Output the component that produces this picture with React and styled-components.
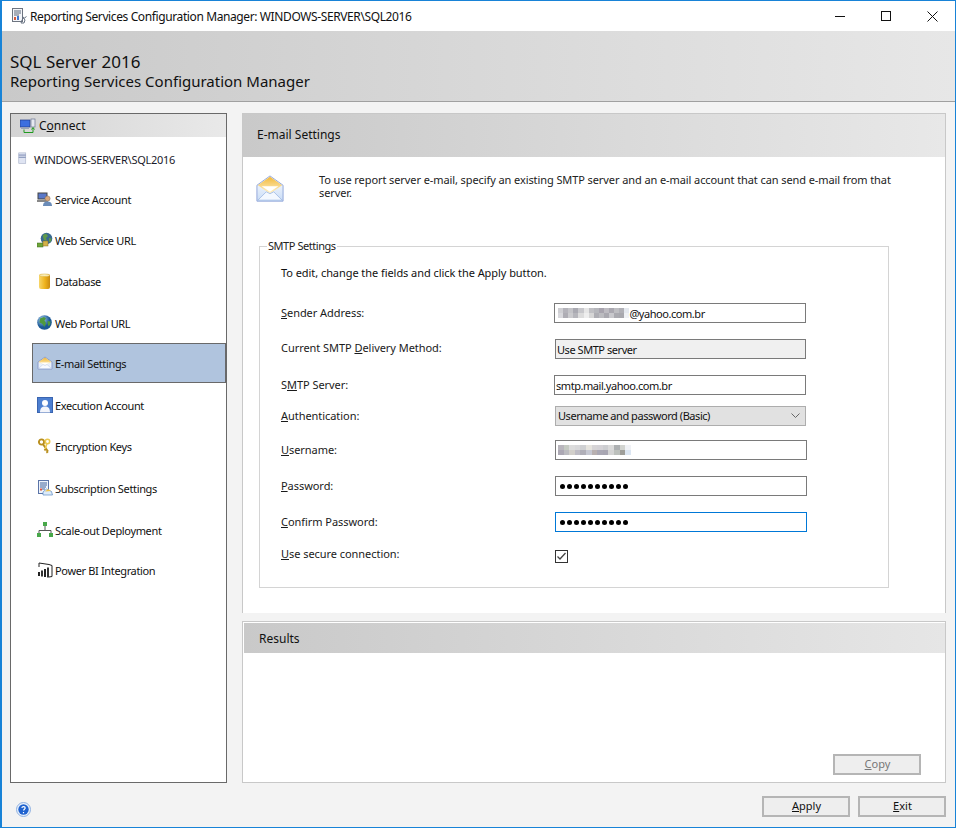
import React from 'react';
import styled, { createGlobalStyle } from 'styled-components';

const Global = createGlobalStyle`
  html, body { margin: 0; padding: 0; background: #f3f3f3; }
  body { font-family: "Noto Sans", "Open Sans", sans-serif; color: #000; }
  u { text-underline-offset: 1px; text-decoration-thickness: 1px; }
`;

const Win = styled.div`
  width: 956px; height: 828px; box-sizing: border-box;
  border: 1px solid #1883d7; border-left-width: 2px;
  background: #f3f3f3; display: flex; flex-direction: column; overflow: hidden;
`;
const TitleBar = styled.div`
  height: 30px; background: #fff; display: flex; align-items: center; padding-left: 9px; flex: none;
`;
const TitleText = styled.div`
  font-size: 12px; margin-left: 3px; white-space: nowrap; letter-spacing: -.39px; flex: 1; color: #111;
`;
const WinBtn = styled.div`
  width: 46px; height: 30px; display: flex; align-items: center; justify-content: center;
  svg { display: block; }
`;
const Banner = styled.div`
  height: 71px; flex: none; box-sizing: border-box; border-bottom: 1px solid #a0a0a0;
  background: linear-gradient(90deg, #c9c9c9, #e7e7e7);
  padding: 21px 0 0 8px; color: #111;
`;
const BannerTitle = styled.div`font-size: 17px; line-height: 20px;`;
const BannerSub = styled.div`font-size: 15px; line-height: 18px;`;

const Main = styled.div`
  flex: none; height: 670px; margin-top: 11px; padding: 0 9px 0 8px; display: flex; gap: 15px;
`;
const Sidebar = styled.div`
  width: 217px; height: 670px; flex: none; box-sizing: border-box;
  border: 1px solid #696969; background: #fff; display: flex; flex-direction: column;
`;
const ConnectBar = styled.div`
  height: 23px; flex: none; display: flex; align-items: center; padding-left: 9px; gap: 3px;
  font-size: 12px; color: #111;
  background: linear-gradient(90deg, #d4d4d4, #e9e9e9);
`;
const ServerRow = styled.div`
  display: flex; align-items: center; gap: 3px; height: 20px; margin-top: 12px; padding-left: 6px;
  font-size: 11px; color: #1a1a2a; white-space: nowrap; letter-spacing: -.26px;
`;
const Nav = styled.div`display: flex; flex-direction: column; padding: 10px 0 0 21px;`;
const NavItem = styled.div`
  height: 40px; flex: none; box-sizing: border-box; display: flex; align-items: center; gap: 2px;
  margin-top: ${p => p.$mt}px; padding-left: 4px; font-size: 11px; color: #111; white-space: nowrap;
  letter-spacing: -.35px;
  border: 1px solid ${p => p.$active ? '#696969' : 'transparent'};
  background: ${p => p.$active ? '#b0c4de' : 'transparent'};
  svg { flex: none; }
`;

const Right = styled.div`flex: 1; display: flex; flex-direction: column; width: 704px;`;
const Panel = styled.div`
  height: 500px; box-sizing: border-box; flex: none; background: #fff;
  border: 1px solid #c8c8c8; border-bottom: 0; display: flex; flex-direction: column;
`;
const SectionHead = styled.div`
  height: 43px; box-sizing: border-box; flex: none; display: flex; align-items: center; padding: 0 0 2px 14px; font-size: 12px; color: #111;
  background: linear-gradient(90deg, #c9c9c9, #e8e8e8);
`;
const Intro = styled.div`
  display: flex; margin-top: 16px; padding-left: 13px; height: 73px; flex: none;
`;
const EnvelopeWrap = styled.div`
  flex: none; margin-top: 2px; height: 28px;
  svg { display: block; }
`;
const IntroText = styled.p`
  margin: 0 0 0 35px; width: 590px; font-size: 11px; line-height: 13px; color: #222; letter-spacing: -.09px;
`;
const FieldSet = styled.div`
  position: relative; box-sizing: border-box; width: 630px; height: 342px; margin-left: 16px;
  border: 1px solid #d4d4d4; padding: 20px 0 0 21px; font-size: 11px; color: #111;
`;
const Legend = styled.div`
  position: absolute; top: -8px; left: 7px; background: #fff; padding: 0 1px; font-size: 11px; line-height: 14px;
  color: #222; letter-spacing: -.45px;
`;
const Hint = styled.div`height: 16px; line-height: 12px; font-size: 11px; letter-spacing: -.06px;`;
const FormRow = styled.div`
  display: grid; grid-template-columns: 273px 1fr; align-items: center; height: ${p => p.$h}px; margin-top: ${p => p.$mt}px;
`;
const Label = styled.div`
  font-size: 11px; white-space: nowrap; letter-spacing: -.05px; color: #1a1a1a; position: relative; top: ${p => p.$dy || 0}px;
`;
const Input = styled.div`
  width: ${p => p.$w || 252}px; height: 20px; box-sizing: border-box; border: 1px solid ${p => p.$focus ? '#0078d7' : '#7a7a7a'};
  background: ${p => p.$bg || '#fff'}; display: flex; align-items: center; padding-left: ${p => p.$pl || 1}px;
  margin-left: ${p => p.$ml || 0}px; font-size: 11px; color: #111; white-space: nowrap; letter-spacing: -.45px;
`;
const Select = styled.div`
  width: 251px; height: 20px; margin-left: 1px; box-sizing: border-box; border: 1px solid #adadad; background: #e1e1e1;
  display: flex; align-items: center; justify-content: space-between; padding: 0 5px 1px 2px; font-size: 11px; color: #111;
  letter-spacing: -.45px;
`;
const Dots = styled.span`display: flex; gap: 2px; padding-left: 3px;`;
const Dot = styled.i`display: block; width: 5px; height: 5px; border-radius: 50%; background: #000;`;
const CheckBox = styled.div`
  width: 13px; height: 13px; box-sizing: border-box; border: 1px solid #333; margin-left: 1px; background: #fff;
  display: flex; align-items: center; justify-content: center;
`;

const ResultsPanel = styled.div`
  margin-top: 8px; height: 162px; flex: none; box-sizing: border-box; background: #fff;
  border: 1px solid #c8c8c8; padding-top: 1px;
  display: flex; flex-direction: column;
`;
const ResultsHead = styled.div`
  height: 30px; flex: none; display: flex; align-items: center; padding-left: 15px; font-size: 12px; color: #111;
  margin-left: 1px;
  background: linear-gradient(90deg, #c9c9c9, #e6e6e6);
`;
const CopyWrap = styled.div`flex: 1; display: flex; justify-content: flex-end; align-items: flex-end; padding: 0 24px 7px 0;`;
const Btn = styled.div`
  width: 88px; height: 21px; box-sizing: border-box; border: 2px solid #b5b5b5; background: #eee;
  display: flex; align-items: center; justify-content: center; padding: 0 0 2px 1px; font-size: 11px;
  color: ${p => p.$dis ? '#777' : '#111'};
`;
const Footer = styled.div`
  flex: 1; display: flex; align-items: flex-start; justify-content: space-between; padding: 13px 9px 0 14px;
`;
const BtnGroup = styled.div`display: flex; gap: 8px;`;
const HelpIcon = styled.div`margin-top: 4px;`;

const Mosaic = ({ rows, cw = 5, ch = 5 }) => (
  <svg width={rows[0].length * cw} height={rows.length * ch} shapeRendering="crispEdges" aria-hidden style={{ flex: 'none' }}>
    {rows.map((r, j) => r.map((c, i) => <rect key={i + '-' + j} x={i * cw} y={j * ch} width={cw + .5} height={ch} fill={c} />))}
  </svg>
);
const senderMosaic = [
  ['#cfcfd3', '#b4b3ba', '#c4c4c8', '#aaaab2', '#c8c8cc', '#e6e6e6', '#c0c0c4', '#b6b7bc', '#a8a4ae', '#bebcc2', '#aaa8b0', '#bebec2', '#b0b0b6', '#e4e8ee'],
  ['#d8d8dc', '#aeadb4', '#cbcbce', '#b6b6bc', '#dcdcdc', '#eeeeee', '#d6d6d6', '#aeaeb4', '#bcbcc0', '#aaa9b0', '#c8c8cc', '#aaaab0', '#a8a8ae', '#eef0f4'],
];
const userMosaic = [
  ['#b9b6bd', '#c5cac2', '#dcdcdc', '#d8d8da', '#cfd0d2', '#e6e4de', '#d6d4d6', '#d4d2d6', '#cccdd0', '#dadada', '#adb0b2', '#d2d4d0', '#f0f2f6'],
  ['#aca8b4', '#bcbcc0', '#d2cfca', '#bebcc4', '#b0afb8', '#c6c8d2', '#b8b0b0', '#aaa8b4', '#a8a6b2', '#d4d4d4', '#bcc0bc', '#9f9f9a', '#dce6f2'],
];

const Ic = ({ children, s = 16 }) => <svg width={s} height={s} viewBox="0 0 16 16" aria-hidden>{children}</svg>;

const icons = {
  account: <Ic><rect x="1" y="2" width="9" height="6" fill="#5a78c8" stroke="#444" /><rect x="0" y="9" width="11" height="2" fill="#888" /><circle cx="10.5" cy="7.5" r="2.6" fill="#d9a77a" stroke="#7b6a5a" strokeWidth=".5" /><path d="M6 15c0-3.5 2-4.6 4.5-4.6s4.500 1.100 4.500 4.600z" fill="#6b8cb8" /></Ic>,
  web: <Ic><circle cx="9.500" cy="6.500" r="5.800" fill="#3a6a90" /><path d="M6 3l3-1.500 2 2.500-2 2 1 3-3-1-1-3zM12 6l2.500.5-.5 3-2 .5z" fill="#5f9a4a" /><rect x="0" y="11" width="6" height="4" fill="#6fa53a" stroke="#3b6e1f" strokeWidth=".5" /><rect x="6" y="9" width="5" height="5" fill="#d4b24a" stroke="#85702a" strokeWidth=".5" /></Ic>,
  db: <Ic><defs><linearGradient id="dbg"><stop offset="0" stopColor="#f7d66a" /><stop offset=".55" stopColor="#eeb21c" /><stop offset="1" stopColor="#c98a10" /></linearGradient></defs><rect x="2" y="1" width="11" height="15" rx="2" fill="url(#dbg)" /><ellipse cx="7.500" cy="2.200" rx="5" ry="1.300" fill="#fbeeb8" stroke="#c9a030" strokeWidth=".4" /></Ic>,
  globe: <Ic><defs><radialGradient id="glb" cx=".35" cy=".3"><stop offset="0" stopColor="#a7cdf0" /><stop offset="1" stopColor="#1c5a96" /></radialGradient></defs><circle cx="7.500" cy="7.500" r="7.300" fill="url(#glb)" /><path d="M3 3.500l4-1.500 2 1.500-1.500 2 1.500 2.500-1.500 4-2-3-3-1.500zM10.500 6l3 .5-.5 3.500-2 1z" fill="#4f9a3e" /></Ic>,
  mail: <Ic><defs><linearGradient id="mlg" x1="0" y1="0" x2="0" y2="1"><stop offset="0" stopColor="#f0b838" /><stop offset="1" stopColor="#fff1c4" /></linearGradient></defs><path d="M1 7l7-5 7 5v7H1z" fill="#e9f0fb" stroke="#8b9ccc" /><path d="M1.500 7l6.500-4.500L14.500 7 8 10z" fill="url(#mlg)" /><path d="M3 7.500h10L8 10z" fill="#fff" /><path d="M1.500 13.500l4.500-4 2 1 2-1 4.500 4z" fill="#f9fbff" stroke="#b6c6e4" strokeWidth=".5" /></Ic>,
  exec: <Ic><rect x=".500" y=".500" width="15" height="15" fill="#4d7fd0" stroke="#3a64b0" /><circle cx="8" cy="6" r="3" fill="#fff" /><path d="M3 15.500c0-4.500 2-6 5-6s5 1.500 5 6z" fill="#f3f5fb" /></Ic>,
  keys: <Ic><g fill="none" stroke="#b98f1e" strokeWidth="1.900"><circle cx="4.500" cy="4" r="2.600" /><path d="M6 6.200l5 7.300M9.300 11l-2 1.300M11 13.500l-1.700 1.100" /></g><g fill="none" stroke="#ecc94f" strokeWidth="1.600"><circle cx="10.500" cy="3.500" r="2.200" /><path d="M9.800 5.800l-1.500 5" /></g></Ic>,
  subs: <Ic><rect x="1.500" y=".500" width="10" height="13" fill="#eef3fb" stroke="#5b74a8" /><path d="M3 3h7M3 5h7M3 7h6M5 9h3" stroke="#41629c" strokeWidth="1" /><rect x="3" y="8.500" width="2" height="2" fill="#d9533b" /><path d="M6 15l0-3 3.500-3 5 2.500 1 3.500z" fill="#dcebfa" stroke="#5d8ac2" strokeWidth=".7" /><path d="M8 11.500l3-2.500 3 2z" fill="#f1c242" /></Ic>,
  scale: <Ic><path d="M8 4v4M2 12V8.500h12V12" stroke="#555" strokeWidth="1" fill="none" /><rect x="6" y="0" width="4" height="4" fill="#48a84a" /><rect x="0" y="11" width="4" height="4" fill="#48a84a" /><rect x="12" y="11" width="4" height="4" fill="#48a84a" /></Ic>,
  pbi: <Ic><path d="M2 5V1l10 1.500 3 1v11l-3 .5" fill="none" stroke="#222" strokeWidth="1" /><rect x="1" y="10" width="2" height="4" fill="#222" /><rect x="4" y="8.500" width="2" height="6" fill="#333" /><rect x="7" y="7" width="2" height="8" fill="#222" /><rect x="10" y="5.500" width="2" height="10" fill="#333" /></Ic>,
};

const nav = [
  ['account', 'Service Account', 0], ['web', 'Web Service URL', 1], ['db', 'Database', 1], ['globe', 'Web Portal URL', 2],
  ['mail', 'E-mail Settings', 0], ['exec', 'Execution Account', 2], ['keys', 'Encryption Keys', 1],
  ['subs', 'Subscription Settings', 2], ['scale', 'Scale-out Deployment', 2], ['pbi', 'Power BI Integration', 0],
];

const Password = () => <Dots>{Array.from({ length: 10 }, (_, i) => <Dot key={i} />)}</Dots>;
const Chevron = () => <svg width="9" height="5" viewBox="0 0 9 5" aria-hidden><path d="M.5.5l4 4 4-4" fill="none" stroke="#666" strokeWidth="1" /></svg>;

export default function App() {
  return (
    <Win>
      <Global />
      <TitleBar>
        <Ic><rect x="1.500" y=".500" width="10" height="13" fill="#f4f6fa" stroke="#6d7480" /><path d="M3 3h7M3 5h7M3 7h5" stroke="#5b6678" /><rect x="3" y="9" width="2" height="3" fill="#d55a3a" /><rect x="6" y="8" width="2" height="4" fill="#4477cc" /><path d="M10 15l1-3 1.500-2 1.500 2-1 3zM11 8.500l2.500 1.500 2-1.500" fill="none" stroke="#667080" /></Ic>
        <TitleText>Reporting Services Configuration Manager: WINDOWS-SERVER\SQL2016</TitleText>
        <WinBtn><svg width="11" height="11" aria-hidden><rect x="0" y="5" width="10" height="1" fill="#111" /></svg></WinBtn>
        <WinBtn><svg width="11" height="11" aria-hidden><rect x=".500" y=".500" width="9" height="9" fill="none" stroke="#111" /></svg></WinBtn>
        <WinBtn><svg width="11" height="11" viewBox="0 0 11 11" aria-hidden><path d="M.500.500l10 10M10.500.500l-10 10" stroke="#111" strokeWidth="1" /></svg></WinBtn>
      </TitleBar>
      <Banner>
        <BannerTitle>SQL Server 2016</BannerTitle>
        <BannerSub>Reporting Services Configuration Manager</BannerSub>
      </Banner>
      <Main>
        <Sidebar>
          <ConnectBar>
            <Ic><rect x="0" y="2" width="10" height="7" fill="#3d6fe0" stroke="#203a88" strokeWidth=".7" /><rect x="1" y="9.500" width="8" height="1.500" fill="#9aa3b8" /><rect x="11" y="1" width="4" height="8" fill="#e5e8f0" stroke="#6a7490" strokeWidth=".7" /><path d="M4 11.500V14.500H13V10M11.500 11.500L13 9.500l1.500 2" fill="none" stroke="#1f9a1f" strokeWidth="1" /></Ic>
            <span>C<u>o</u>nnect</span>
          </ConnectBar>
          <ServerRow>
            <Ic s={14}><rect x="2" y="1" width="8" height="12" fill="#dfe4f2" stroke="#a7b0c8" strokeWidth=".7" /><path d="M2 3.500h8M2 6h8" stroke="#6b7da8" strokeWidth="1" /></Ic>
            <span>WINDOWS-SERVER\SQL2016</span>
          </ServerRow>
          <Nav>
            {nav.map(([ic, label, mt]) => (
              <NavItem key={label} $mt={mt} $active={label === 'E-mail Settings'}>
                {icons[ic]}<span>{label}</span>
              </NavItem>
            ))}
          </Nav>
        </Sidebar>
        <Right>
          <Panel>
            <SectionHead>E-mail Settings</SectionHead>
            <Intro>
              <EnvelopeWrap>
                <svg width="28" height="28" viewBox="0 0 30 30" aria-hidden>
                  <defs>
                    <linearGradient id="env" x1="0" y1="0" x2="0" y2="1"><stop offset="0" stopColor="#f2b93a" /><stop offset="1" stopColor="#fff3cf" /></linearGradient>
                    <linearGradient id="envb" x1="0" y1="0" x2="0" y2="1"><stop offset="0" stopColor="#fff" /><stop offset="1" stopColor="#c9dcf6" /></linearGradient>
                  </defs>
                  <path d="M1 11L15 1l14 10v17H1z" fill="url(#envb)" stroke="#8ea4d8" strokeWidth="1" />
                  <path d="M2 11L15 2l13 9-13 9z" fill="url(#env)" />
                  <path d="M6 12h18l-9 6z" fill="#fff" />
                  <path d="M2 27l9-9 4 2 4-2 9 9z" fill="#f3f8ff" stroke="#a7bfe6" strokeWidth="1" />
                </svg>
              </EnvelopeWrap>
              <IntroText>To use report server e-mail, specify an existing SMTP server and an e-mail account that can send e-mail from that server.</IntroText>
            </Intro>
            <FieldSet>
              <Legend>SMTP Settings</Legend>
              <Hint>To edit, change the fields and click the Apply button.</Hint>
              <FormRow $h={20} $mt={20}>
                <Label $dy={-1}><u>S</u>ender Address:</Label>
                <Input $pl={3}><Mosaic rows={senderMosaic} cw={5.1} />@yahoo.com.br</Input>
              </FormRow>
              <FormRow $h={20} $mt={16}>
                <Label $dy={-2}>Current SMTP <u>D</u>elivery Method:</Label>
                <Input $w={251} $ml={1} $bg="#f0f0f0" $pl={1}>Use SMTP server</Input>
              </FormRow>
              <FormRow $h={20} $mt={16}>
                <Label $dy={-1}>S<u>M</u>TP Server:</Label>
                <Input>smtp.mail.yahoo.com.br</Input>
              </FormRow>
              <FormRow $h={20} $mt={11}>
                <Label $dy={-1}><u>A</u>uthentication:</Label>
                <Select>Username and password (Basic)<Chevron /></Select>
              </FormRow>
              <FormRow $h={20} $mt={14}>
                <Label $dy={-1}><u>U</u>sername:</Label>
                <Input $ml={1} $pl={2}><Mosaic rows={userMosaic} cw={5.6} /></Input>
              </FormRow>
              <FormRow $h={20} $mt={16}>
                <Label $dy={-1}><u>P</u>assword:</Label>
                <Input $ml={1}><Password /></Input>
              </FormRow>
              <FormRow $h={20} $mt={16}>
                <Label $dy={-1}><u>C</u>onfirm Password:</Label>
                <Input $ml={1} $focus><Password /></Input>
              </FormRow>
              <FormRow $h={13} $mt={17}>
                <Label $dy={-3}><u>U</u>se secure connection:</Label>
                <CheckBox><svg width="11" height="11" viewBox="0 0 11 11" aria-hidden><path d="M1.500 5.500l2.500 2.500 5.500-6" fill="none" stroke="#444" strokeWidth="1.300" /></svg></CheckBox>
              </FormRow>
            </FieldSet>
          </Panel>
          <ResultsPanel>
            <ResultsHead>Results</ResultsHead>
            <CopyWrap><Btn $dis><span><u>C</u>opy</span></Btn></CopyWrap>
          </ResultsPanel>
        </Right>
      </Main>
      <Footer>
        <HelpIcon>
          <svg width="15" height="15" viewBox="0 0 15 15" aria-hidden><circle cx="7.500" cy="7.500" r="7" fill="#e8f0fb" stroke="#8fb0e0" /><circle cx="7.500" cy="7.500" r="5.200" fill="#1f62cf" /><path d="M5.800 5.800c.3-1.600 3.400-1.600 3.400.2 0 1.200-1.600 1.200-1.600 2.500M7.500 10v1.300" fill="none" stroke="#fff" strokeWidth="1.200" /></svg>
        </HelpIcon>
        <BtnGroup>
          <Btn><span><u>A</u>pply</span></Btn>
          <Btn><span><u>E</u>xit</span></Btn>
        </BtnGroup>
      </Footer>
    </Win>
  );
}
